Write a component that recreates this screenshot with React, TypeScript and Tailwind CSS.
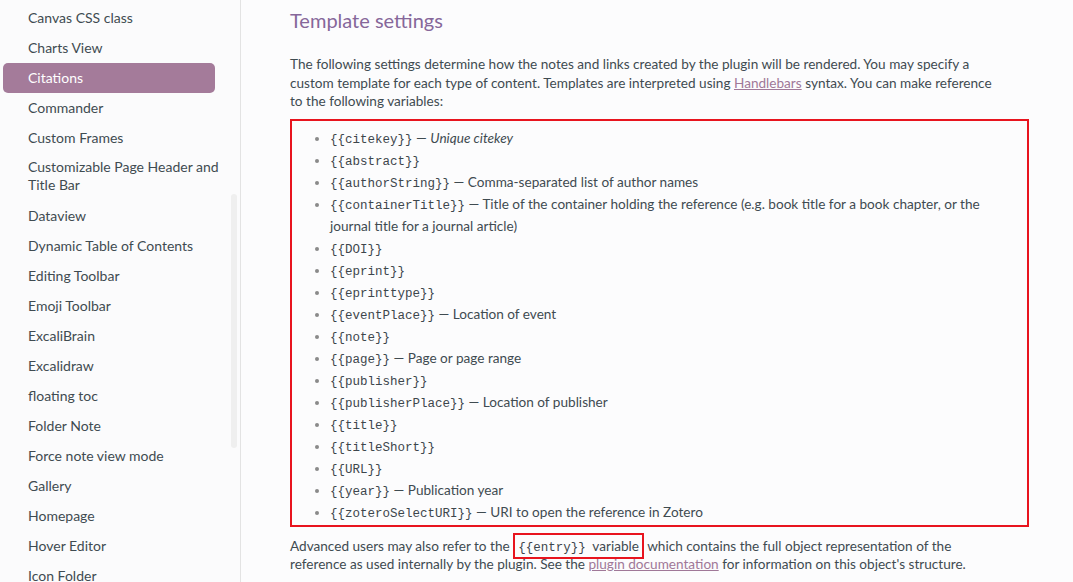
import React from 'react';

const sidebarItems = [
  'Canvas CSS class',
  'Charts View',
  'Citations',
  'Commander',
  'Custom Frames',
  'Customizable Page Header and Title Bar',
  'Dataview',
  'Dynamic Table of Contents',
  'Editing Toolbar',
  'Emoji Toolbar',
  'ExcaliBrain',
  'Excalidraw',
  'floating toc',
  'Folder Note',
  'Force note view mode',
  'Gallery',
  'Homepage',
  'Hover Editor',
  'Icon Folder',
];

const variables: { name: string; desc?: string }[] = [
  { name: 'citekey', desc: 'Unique citekey' },
  { name: 'abstract' },
  { name: 'authorString', desc: 'Comma-separated list of author names' },
  {
    name: 'containerTitle',
    desc: 'Title of the container holding the reference (e.g. book title for a book chapter, or the journal title for a journal article)',
  },
  { name: 'DOI' },
  { name: 'eprint' },
  { name: 'eprinttype' },
  { name: 'eventPlace', desc: 'Location of event' },
  { name: 'note' },
  { name: 'page', desc: 'Page or page range' },
  { name: 'publisher' },
  { name: 'publisherPlace', desc: 'Location of publisher' },
  { name: 'title' },
  { name: 'titleShort' },
  { name: 'URL' },
  { name: 'year', desc: 'Publication year' },
  { name: 'zoteroSelectURI', desc: 'URI to open the reference in Zotero' },
];

const sans = "font-['Lato','Open_Sans',sans-serif]";
const mono = "font-['Liberation_Mono','DejaVu_Sans_Mono',monospace]";

const Code: React.FC<{ children: React.ReactNode }> = ({ children }) => (
  <code className={`${mono} text-[12.5px] leading-none text-[#3d464c]`}>{children}</code>
);

const Sidebar: React.FC = () => (
  <aside className="w-[241px] shrink-0 h-[582px] overflow-hidden bg-[#fbfbfc] border-r border-[#e3e3e3] flex">
    <div className="w-[230px] min-w-0 pl-[3px] pr-[15px] pt-[3px]">
      <ul className="flex flex-col">
        {sidebarItems.map((item) => (
          <li
            key={item}
            className={
              item === 'Citations'
                ? 'rounded-[5px] bg-[#a47b9a] text-white pl-[25px] pr-2 py-[5px] text-[14px] leading-[20px] whitespace-nowrap'
                : item === 'Customizable Page Header and Title Bar'
                  ? 'pl-[25px] pr-2 pt-[5px] pb-[7px] text-[14px] leading-[18px] text-[#3f4b51] whitespace-nowrap'
                  : 'pl-[25px] pr-2 py-[5px] text-[14px] leading-[20px] text-[#3f4b51] whitespace-nowrap'
            }
          >
            {item === 'Customizable Page Header and Title Bar' ? (
              <>
                Customizable Page Header and
                <br />
                Title Bar
              </>
            ) : (
              item
            )}
          </li>
        ))}
      </ul>
    </div>
    <div className="w-[6px] ml-[1px] pt-[194px]">
      <div className="h-[254px] w-[6px] rounded-[3px] bg-[#efefef]" />
    </div>
  </aside>
);

const App: React.FC = () => {
  return (
    <div className={`${sans} w-[1073px] h-[582px] flex bg-[#fcfcfd] overflow-hidden`}>
      <Sidebar />
      <main className="flex-1 pl-[49px] pr-[44px] pt-[7px] text-[#3f4b51]">
        <h2 className="text-[20px] leading-[26px] text-[#86679a] mb-[22px]">Template settings</h2>
        <p className="text-[13.6px] leading-[18.5px] mb-[8px]">
          The following settings determine how the notes and links created by the plugin will be rendered. You may specify a
          <br />
          custom template for each type of content. Templates are interpreted using{' '}
          <a className="text-[#a07898] underline decoration-[#a07898]">Handlebars</a> syntax. You can make reference
          <br />
          to the following variables:
        </p>
        <div className="border-2 border-[#e8141e] pt-[6px] pb-[2px] pl-[36px] pr-[14px]">
          <ul className="list-disc marker:text-[#8a8a8a] pl-[2px] text-[13.6px] leading-[22px]">
            {variables.map((v) => (
              <li key={v.name}>
                <Code>{`{{${v.name}}}`}</Code>
                {v.desc && (
                  <span>
                    {' '}
                    — {v.name === 'citekey' ? <span className="italic">{v.desc}</span> : v.desc}
                  </span>
                )}
              </li>
            ))}
          </ul>
        </div>
        <p className="text-[13.6px] leading-[18.5px] mt-[10px]">
          Advanced users may also refer to the{' '}
          <span className="border-2 border-[#e8141e] px-[3px] py-[3px]">
            <Code>{'{{entry}}'}</Code>&nbsp; variable
          </span>{' '}
          which contains the full object representation of the
          <br />
          reference as used internally by the plugin. See the{' '}
          <a className="text-[#a07898] underline decoration-[#a07898]">plugin documentation</a> for information on this
          object's structure.
        </p>
      </main>
    </div>
  );
};

export default App;
